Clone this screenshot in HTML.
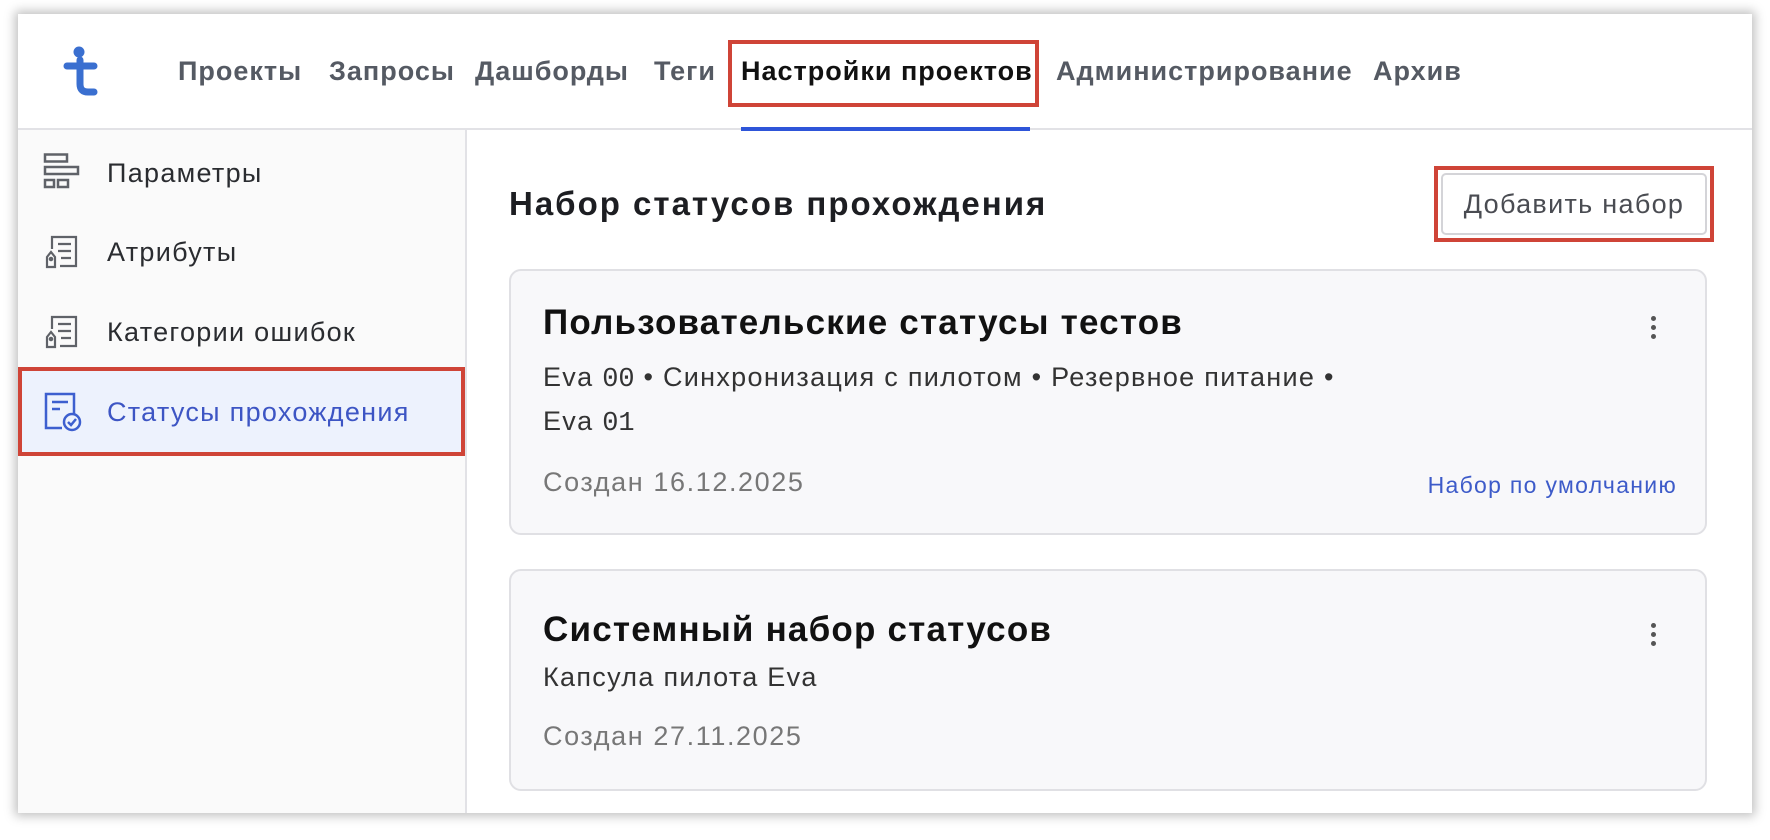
<!DOCTYPE html>
<html><head><meta charset="utf-8"><style>
*{margin:0;padding:0;box-sizing:border-box}
body{width:1770px;height:840px;background:#fff;position:relative;overflow:hidden;font-family:"Liberation Sans","Noto Sans CJK SC",sans-serif}
.win{position:absolute;left:18px;top:14px;width:1734px;height:799px;background:#fff;box-shadow:0 0 10px 3px rgba(0,0,0,.25);overflow:hidden}
.a{position:absolute;white-space:nowrap}
.nav{top:42px;font-size:27px;font-weight:bold;color:#555a63;letter-spacing:1px}
.side{position:absolute;left:0;top:116px;width:449px;height:700px;background:#fafafa;border-right:2px solid #e2e2e6}
.hdr{position:absolute;left:0;top:114px;width:1734px;height:2px;background:#e2e2e6}
.si{font-size:27px;color:#2a2c30;left:89px;letter-spacing:1.3px}
.card{position:absolute;left:491px;width:1198px;background:#f8f8fa;border:2px solid #e0e0e4;border-radius:12px}
.ct{font-size:35px;font-weight:bold;color:#111;left:32px;letter-spacing:1.2px}
.cl{font-size:27px;color:#333;left:32px;letter-spacing:1.3px}
.cd{font-size:27px;color:#777;left:32px;letter-spacing:1.6px}
.keb{position:absolute;width:5px;height:5px;border-radius:50%;background:#555}
</style></head><body>
<div class="win">
<div class="hdr"></div>
<svg class="a" style="left:45px;top:32px" width="36" height="52" viewBox="0 0 36 52"><circle cx="16" cy="6" r="5.5" fill="#3a6fd0"/><path d="M4 20 H31 M17 14 V38 Q17 46 25 46 H31" stroke="#3a6fd0" stroke-width="7" fill="none" stroke-linecap="round"/></svg>
<div class="a nav" style="left:160px">Проекты</div>
<div class="a nav" style="left:311px">Запросы</div>
<div class="a nav" style="left:457px">Дашборды</div>
<div class="a nav" style="left:636px">Теги</div>
<div class="a nav" style="left:723px;color:#111">Настройки проектов</div>
<div class="a nav" style="left:1038px">Администрирование</div>
<div class="a nav" style="left:1355px">Архив</div>
<div class="a" style="left:710px;top:26px;width:311px;height:67px;border:4px solid #cf4437"></div>
<div class="a" style="left:723px;top:113px;width:289px;height:4px;background:#2e55d9"></div>

<div class="side"></div>
<svg class="a" style="left:25px;top:139px" width="37" height="37" viewBox="0 0 37 37" fill="none" stroke="#5f6268" stroke-width="2.5"><rect x="2" y="1.5" width="22" height="7"/><rect x="2" y="14" width="33" height="7"/><rect x="2" y="27" width="9" height="7"/><rect x="15" y="27" width="10" height="7"/></svg>
<svg class="a" style="left:26px;top:221px" width="34" height="34" viewBox="0 0 34 34" fill="none" stroke="#5f6268" stroke-width="2.2"><path d="M8 14 V2 H32 V31 H16"/><path d="M14 9H27M14 16H27M17 23H27"/><path d="M3 22 L7 17 L11 22 V32 H3Z"/><circle cx="7" cy="24" r="1.2"/></svg>
<svg class="a" style="left:26px;top:301px" width="34" height="34" viewBox="0 0 34 34" fill="none" stroke="#5f6268" stroke-width="2.2"><path d="M8 14 V2 H32 V31 H16"/><path d="M14 9H27M14 16H27M17 23H27"/><path d="M3 22 L7 17 L11 22 V32 H3Z"/><circle cx="7" cy="24" r="1.2"/></svg>
<div class="a si" style="top:144px">Параметры</div>
<div class="a si" style="top:223px">Атрибуты</div>
<div class="a si" style="top:303px">Категории ошибок</div>
<div class="a" style="left:0;top:353px;width:447px;height:89px;background:#edf2fd;border:4px solid #cf4437"></div>
<svg class="a" style="left:26px;top:378px" width="38" height="40" viewBox="0 0 38 40" fill="none" stroke="#3d5fcf" stroke-width="2.5"><path d="M18 36 H2 V2 H30 V22"/><path d="M8 10H24M8 17H16"/><circle cx="28" cy="30" r="8"/><path d="M24 30 L27 33 L32 27"/></svg>
<div class="a si" style="top:383px;color:#3d55c4">Статусы прохождения</div>

<div class="a" style="left:491px;top:171px;font-size:33px;font-weight:bold;color:#1d1e22;letter-spacing:2px">Набор статусов прохождения</div>
<div class="a" style="left:1416px;top:152px;width:280px;height:76px;border:4px solid #cf4437"></div>
<div class="a" style="left:1423px;top:159px;width:266px;height:62px;border:2px solid #d4d4d8;border-radius:5px;background:#fff;font-size:27px;color:#4a4c52;text-align:center;line-height:58px;letter-spacing:1.3px">Добавить набор</div>

<div class="card" style="top:255px;height:266px">
<div class="a ct" style="top:32px">Пользовательские статусы тестов</div>
<div class="keb" style="left:1140px;top:45px"></div><div class="keb" style="left:1140px;top:54px"></div><div class="keb" style="left:1140px;top:63px"></div>
<div class="a cl" style="top:91px">Eva <span style="font-family:'Liberation Mono',monospace;letter-spacing:0">00</span> • Синхронизация с пилотом • Резервное питание •</div>
<div class="a cl" style="top:135px">Eva <span style="font-family:'Liberation Mono',monospace;letter-spacing:0">01</span></div>
<div class="a cd" style="top:196px">Создан 16.12.2025</div>
<div class="a" style="right:28px;top:201px;font-size:23px;color:#3d5bc9;letter-spacing:1.3px">Набор по умолчанию</div>
</div>

<div class="card" style="top:555px;height:222px">
<div class="a ct" style="top:39px">Системный набор статусов</div>
<div class="keb" style="left:1140px;top:52px"></div><div class="keb" style="left:1140px;top:61px"></div><div class="keb" style="left:1140px;top:70px"></div>
<div class="a cl" style="top:91px">Капсула пилота Eva</div>
<div class="a cd" style="top:150px">Создан 27.11.2025</div>
</div>
</div>
</body></html>
